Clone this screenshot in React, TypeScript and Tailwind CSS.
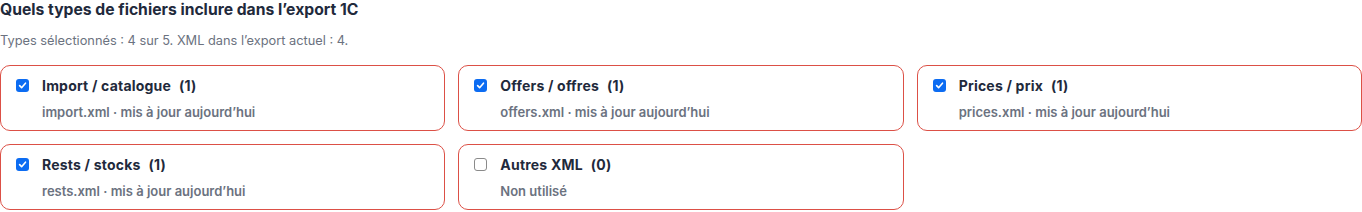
import React from "react";

type Item = { title: string; count: number; sub: string; checked: boolean };

const items: Item[] = [
  { title: "Import / catalogue", count: 1, sub: "import.xml · mis à jour aujourd’hui", checked: true },
  { title: "Offers / offres", count: 1, sub: "offers.xml · mis à jour aujourd’hui", checked: true },
  { title: "Prices / prix", count: 1, sub: "prices.xml · mis à jour aujourd’hui", checked: true },
  { title: "Rests / stocks", count: 1, sub: "rests.xml · mis à jour aujourd’hui", checked: true },
  { title: "Autres XML", count: 0, sub: "Non utilisé", checked: false },
];

function Box({ checked }: { checked: boolean }) {
  if (checked) {
    return (
      <span className="flex h-[13px] w-[13px] shrink-0 items-center justify-center rounded-[3px] bg-[#0c6cf2]">
        <svg width="9" height="9" viewBox="0 0 10 10" fill="none">
          <path d="M1.8 5.2 L4 7.4 L8.3 2.4" stroke="white" strokeWidth="1.8" strokeLinecap="round" strokeLinejoin="round" />
        </svg>
      </span>
    );
  }
  return <span className="block h-[13px] w-[13px] shrink-0 rounded-[3px] border border-[#8a8a8a] bg-white" />;
}

export default function App() {
  return (
    <div className="w-[1362px] bg-white font-['Inter','Noto_Sans',sans-serif]">
      <div className="text-[15.7px] font-bold leading-[20px] text-[#1f2a3c]">
        Quels types de fichiers inclure dans l’export 1C
      </div>
      <div className="mt-[13px] text-[12.8px] leading-[16px] text-[#6b7280]">
        Types sélectionnés : 4 sur 5. XML dans l’export actuel : 4.
      </div>
      <div className="mt-[16px] grid grid-cols-3 gap-[13px]">
        {items.map((it) => (
          <label
            key={it.title}
            className="flex h-[66px] items-start gap-[13px] rounded-[10px] border-[1.5px] border-[#dc5046] bg-white pl-[15px] pr-4 pt-[11px]"
          >
            <span className="mt-[2px] block">
              <Box checked={it.checked} />
            </span>
            <span className="flex flex-col">
              <span className="text-[14px] font-bold leading-[18px] tracking-[0.2px] text-[#1f2a3c]">
                {it.title}
                <span className="ml-[8px]">({it.count})</span>
              </span>
              <span className="mt-[9px] text-[13px] font-semibold leading-[16px] text-[#6b7280]">{it.sub}</span>
            </span>
          </label>
        ))}
      </div>
    </div>
  );
}
